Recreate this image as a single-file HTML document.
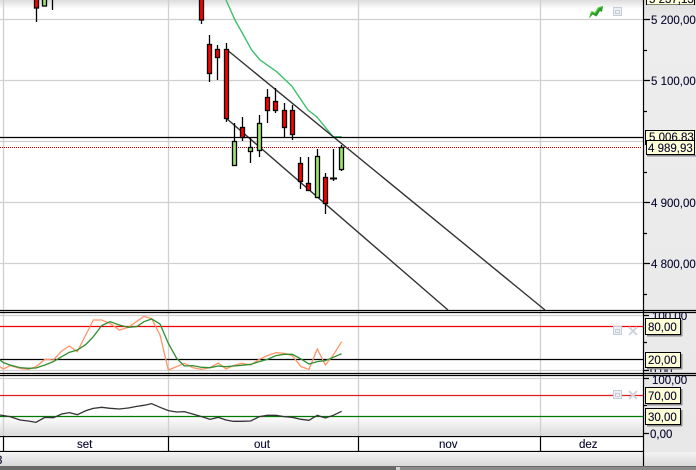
<!DOCTYPE html>
<html>
<head>
<meta charset="utf-8">
<style>
html,body{margin:0;padding:0;background:#fff;width:696px;height:470px;overflow:hidden}
svg{display:block;position:absolute;left:0;top:0}
text{font-family:"Liberation Sans",sans-serif;font-size:11.5px;fill:#08082e;stroke:#08082e;stroke-width:.12px}
</style>
</head>
<body>
<svg width="696" height="470" viewBox="0 0 696 470" xmlns="http://www.w3.org/2000/svg">
<defs>
<linearGradient id="top" x1="0" y1="0" x2="0" y2="1"><stop offset="0" stop-color="#dcdcdc"/><stop offset="1" stop-color="#fff"/></linearGradient>
<linearGradient id="low" x1="0" y1="0" x2="0" y2="1"><stop offset="0" stop-color="#fff"/><stop offset="1" stop-color="#dcdcdc"/></linearGradient>
<linearGradient id="bar" x1="0" y1="0" x2="0" y2="1"><stop offset="0" stop-color="#f4f4f4"/><stop offset="1" stop-color="#d8d8d8"/></linearGradient>
<linearGradient id="ax" x1="0" y1="0" x2="0" y2="1"><stop offset="0" stop-color="#dedede"/><stop offset="0.05" stop-color="#ededed"/><stop offset="1" stop-color="#e8e8e8"/></linearGradient>
<clipPath id="p1"><rect x="644" y="313" width="52" height="59"/></clipPath>
<clipPath id="t0"><rect x="640" y="0" width="56" height="5"/></clipPath>
</defs>

<rect x="0" y="0" width="643" height="470" fill="#fff"/>
<rect x="0" y="0" width="643" height="9" fill="url(#top)"/>
<rect x="0" y="416" width="643" height="19" fill="url(#low)"/>
<rect x="644" y="0" width="52" height="470" fill="url(#ax)"/>

<!-- grid -->
<g stroke="#d0d0d0" stroke-width="1.3" fill="none">
<path d="M3.5 0V436M168.5 0V436M358.5 0V436M540.5 0V436"/>
<path d="M0 19.5H643M0 80.5H643M0 141.5H643M0 202.5H643M0 263.5H643"/>
<path d="M0 315.5H643M0 370.5H643M0 378.5H643"/>
</g>

<!-- green MA -->
<polyline fill="none" stroke="#3fc06e" stroke-width="1.4" points="226,0 235,20 251.7,50 260,60 276.7,71.7 291.7,86 308,110 316.7,116.7 333,136.7 341.7,136.7"/>

<!-- trend lines -->
<g stroke="#333" stroke-width="1.4" fill="none">
<path d="M226 49L545 310"/>
<path d="M226 118L448 310"/>
</g>

<!-- level lines -->
<path d="M0 137.5H643" stroke="#000" stroke-width="1.2"/>
<path d="M0 147.5H641" stroke="#c00000" stroke-width="1" stroke-dasharray="1 1"/>

<!-- candles -->
<g stroke="#000" stroke-width="1.3">
<path d="M36.5 0V22M44.5 0V6M52.5 0V10M201.5 0V24"/>
<path d="M209.5 35V82M217.5 45V80M226.5 43V122M234.5 123V165M242.5 117V141M250.5 137V163M259.5 115V157M267.5 89V123M275.5 88V113M284.5 103V137M292.5 105V140M300.5 157V189M308.5 157V191M317.5 149V198M325.5 173V214M333.5 149V181M341.5 145V171"/>
<path d="M330 178.5H337" stroke-width="2"/>
<g fill="#ff0000">
<rect x="34.5" y="-2" width="4" height="10"/>
<rect x="199.5" y="-2" width="4" height="22"/>
<rect x="207.5" y="44.5" width="4" height="29"/>
<rect x="215.5" y="49.5" width="4" height="8"/>
<rect x="224.5" y="49.5" width="4" height="69"/>
<rect x="240.5" y="127.5" width="4" height="10"/>
<rect x="265.5" y="97.5" width="4" height="13"/>
<rect x="273.5" y="101.5" width="4" height="9"/>
<rect x="282.5" y="110.5" width="4" height="17"/>
<rect x="290.5" y="110.5" width="4" height="24"/>
<rect x="298.5" y="163.5" width="4" height="18"/>
<rect x="306.5" y="183.5" width="4" height="7"/>
<rect x="323.5" y="177.5" width="4" height="26"/>
</g>
<g fill="#9ee56e">
<rect x="42.5" y="-2" width="4" height="8"/>
<rect x="232.5" y="141.5" width="4" height="24"/>
<rect x="248.5" y="147.5" width="4" height="4"/>
<rect x="257.5" y="123.5" width="4" height="27"/>
<rect x="315.5" y="156.5" width="4" height="41"/>
<rect x="339.5" y="147.5" width="4" height="22"/>
</g>
</g>

<!-- separators -->
<g stroke="#000" stroke-width="1.2">
<path d="M0 310.5H696M0 312.5H696M0 373.5H696M0 375.5H696"/>
<path d="M0 326.5H643" stroke="#f00000"/>
<path d="M0 359.5H643"/>
<path d="M0 395.5H643" stroke="#e02020"/>
<path d="M0 416.5H643" stroke="#007a00"/>
</g>

<!-- oscillators -->
<g transform="scale(0.33333) translate(0,900)" fill="none" stroke-width="3.9">
<polyline stroke="#ff9468" points="0,200 10,207 30,197 60,205 85,208 108,200 135,178 160,180 185,153 208,138 232,155 280,60 305,60 330,70 358,90 385,82 432,49 455,56 480,105 505,210 530,200 553,190 578,203 605,208 630,203 655,189 678,207 700,197 725,190 752,195 778,178 802,167 828,158 852,160 877,167 903,200 927,208 952,147 976,195 1000,165 1025,125"/>
<polyline stroke="#2f8f2f" points="0,180 10,188 30,195 60,203 85,205 108,204 135,195 160,185 185,170 208,157 232,150 258,133 280,110 305,77 330,65 358,75 385,82 410,80 432,65 455,57 480,72 505,130 530,175 553,198 578,197 605,202 630,203 655,198 678,200 700,198 725,196 752,193 778,185 802,178 828,167 852,163 877,163 903,177 927,192 952,185 976,182 1000,172 1025,161"/>
<polyline stroke="#333" points="0,345 30,350 60,360 85,363 108,367 135,352 160,353 185,342 208,338 232,344 258,332 280,325 305,322 330,325 358,327 385,324 410,319 432,316 455,311 480,322 505,332 530,336 553,335 578,342 605,350 630,358 655,352 678,360 700,364 725,364 752,363 778,350 802,346 828,346 852,350 877,352 903,358 927,361 952,346 976,354 1000,346 1025,334"/>
</g>

<!-- green arrow icon -->
<path d="M589 18.5L591 11.5L594.5 13L598 7.5L603 6L602 12L600 11L596.5 16.5L592.5 14.5Z" fill="#2a9a2a"/>
<path d="M590 15L592 11.5L595 13L599 7.5L602.5 6.5" fill="none" stroke="#58d838" stroke-width="1"/>
<!-- small icons -->
<g fill="#eef0f4" stroke="#c4ccd8" stroke-width="1">
<rect x="613.5" y="7.5" width="8" height="8"/>
<rect x="613.5" y="326.5" width="8" height="8"/>
<rect x="613.5" y="390.5" width="8" height="8"/>
</g>
<g fill="none" stroke="#c4ccd8" stroke-width="1">
<rect x="615.5" y="10.5" width="4" height="3"/>
<rect x="615.5" y="329.5" width="4" height="3"/>
<rect x="615.5" y="393.5" width="4" height="3"/>
</g>
<g fill="none" stroke="#d0d4dc" stroke-width="2">
<path d="M629 327L637 335M637 327L629 335"/>
<path d="M629 391L637 399M637 391L629 399"/>
</g>

<!-- month axis -->
<g stroke="#000" stroke-width="1.2">
<path d="M0 436.5H643M0 451.5H643"/>
<path d="M3.5 436V451M168.5 436V451M358.5 436V451M540.5 436V451"/>
</g>
<text x="77" y="448">set</text>
<text x="254" y="448">out</text>
<text x="439" y="448">nov</text>
<text x="579" y="448">dez</text>

<!-- bottom bar -->
<rect x="0" y="452" width="643" height="14" fill="url(#bar)"/>
<rect x="644" y="452" width="52" height="14" fill="url(#bar)"/>
<text x="-4" y="464">3</text>
<rect x="0" y="466" width="696" height="4" fill="#6a6a6a"/>
<rect x="396" y="467" width="4" height="3" fill="#d0d0d0"/>
<rect x="400" y="467" width="296" height="3" fill="#8a8a8a"/>

<!-- right axis -->
<path d="M643.5 0V466" stroke="#000" stroke-width="1.2"/>
<g stroke="#000" stroke-width="1.2">
<path d="M643 19.5H650M643 50.5H647M643 80.5H650M643 111.5H647M643 172.5H647M643 202.5H650M643 233.5H647M643 263.5H650M643 294.5H647"/>
<path d="M643 315.5H649M643 342.5H647M643 370.5H649M643 378.5H649M643 405.5H647M643 433.5H649"/>
</g>
<text x="651" y="24">5 200,00</text>
<text x="651" y="85">5 100,00</text>
<text x="651" y="207">4 900,00</text>
<text x="651" y="268">4 800,00</text>
<g clip-path="url(#p1)">
<text x="652" y="320">100,00</text>
<text x="650" y="375">0,00</text>
</g>
<text x="652" y="384">100,00</text>
<text x="650" y="438">0,00</text>

<!-- tags -->
<g fill="#ffffd8" stroke="#000" stroke-width="1" shape-rendering="crispEdges">
<g clip-path="url(#t0)"><rect x="646.5" y="-10" width="48" height="15"/></g>
<rect x="645.5" y="130.5" width="49" height="14"/>
<rect x="646.5" y="140.5" width="48" height="14"/>
<rect x="645.5" y="318.5" width="35" height="16"/>
<rect x="645.5" y="352.5" width="35" height="15"/>
<rect x="645.5" y="387.5" width="35" height="16"/>
<rect x="645.5" y="408.5" width="35" height="16"/>
</g>
<g fill="#8c8c8c">
<rect x="647" y="155" width="49" height="1.5"/>
<rect x="647" y="335" width="35" height="1.5"/><rect x="681" y="320" width="1.5" height="16"/>
<rect x="647" y="368" width="35" height="1.5"/><rect x="681" y="354" width="1.5" height="15"/>
<rect x="647" y="404" width="35" height="1.5"/><rect x="681" y="389" width="1.5" height="16"/>
<rect x="647" y="425" width="35" height="1.5"/><rect x="681" y="410" width="1.5" height="16"/>
</g>
<text x="649" y="141">5 006,83</text>
<rect x="647" y="141" width="47" height="13" fill="#ffffd8"/>
<path d="M646.5 140.5H694.5" stroke="#000" stroke-width="1"/>
<text x="648" y="152">4 989,93</text>
<text x="648" y="331">80,00</text>
<text x="648" y="364">20,00</text>
<text x="648" y="400">70,00</text>
<text x="648" y="421">30,00</text>
<g clip-path="url(#t0)"><text x="649" y="3">5 237,13</text></g>
</svg>
</body>
</html>
